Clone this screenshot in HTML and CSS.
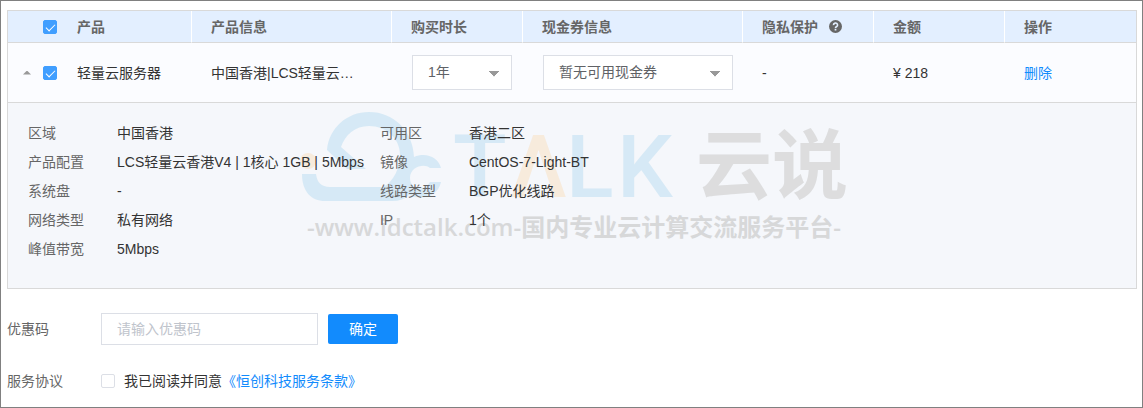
FILE: index.html
```html
<!DOCTYPE html>
<html lang="zh-CN">
<head>
    <meta charset="UTF-8">
    <meta name="viewport" content="width=device-width, initial-scale=1.0">
    <title>确认订单</title>
    <link rel="stylesheet" href="styles.css">
</head>
<body>
    <main class="pagina">
        <section class="pedido">
            <table class="tabla">
                <colgroup>
                    <col class="col-check">
                    <col class="col-producto">
                    <col class="col-info">
                    <col class="col-corta">
                    <col class="col-cupon">
                    <col class="col-corta">
                    <col class="col-corta">
                    <col class="col-corta">
                </colgroup>
                <thead>
                    <tr>
                        <th class="celda-check">
                            <div class="controles">
                                <input type="checkbox" class="check" aria-label="全选" checked>
                            </div>
                        </th>
                        <th class="celda-nombre">产品</th>
                        <th>产品信息</th>
                        <th>购买时长</th>
                        <th>现金券信息</th>
                        <th>
                            <span class="con-ayuda">隐私保护
                                <svg class="ayuda" viewBox="0 0 12 12" aria-hidden="true">
                                    <circle cx="6" cy="6" r="6" fill="#666"/>
                                    <path d="M4.1 4.7a1.9 1.8 0 1 1 2.8 1.5q-.9.5-.9 1.1" fill="none" stroke="#e3efff" stroke-width="1.5"/>
                                    <rect x="5.2" y="8.1" width="1.6" height="1.6" fill="#e3efff"/>
                                </svg>
                            </span>
                        </th>
                        <th>金额</th>
                        <th>操作</th>
                    </tr>
                </thead>
                <tbody>
                    <tr>
                        <td class="celda-check">
                            <div class="controles">
                                <button type="button" class="plegar" aria-label="收起"></button>
                                <input type="checkbox" class="check" aria-label="选择轻量云服务器" checked>
                            </div>
                        </td>
                        <td class="celda-nombre">轻量云服务器</td>
                        <td><div class="recorte">中国香港|LCS轻量云…</div></td>
                        <td class="celda-selector">
                            <select class="selector selector-tiempo" aria-label="购买时长">
                                <option>1年</option>
                            </select>
                        </td>
                        <td class="celda-selector">
                            <select class="selector selector-cupon" aria-label="现金券信息">
                                <option>暂无可用现金券</option>
                            </select>
                        </td>
                        <td>-</td>
                        <td>¥ 218</td>
                        <td><a href="#" class="enlace">删除</a></td>
                    </tr>
                </tbody>
            </table>
            <div class="detalle">
                <svg class="marca" viewBox="300 108 550 134" aria-hidden="true">
                    <circle cx="308" cy="161" r="8" class="marca-naranja"/>
                    <path class="marca-azul" d="M327 150C329 128 347 112 369 112C394 112 413 131 414 157C426 152 438 157 441 168H430C424 163 410 167 410 178C410 190 424 192 430 182H441C438 196 423 201 409 195Q403 201 392 201H325C311 201 302 191 302 174H316C317 182 321 187 330 187H383C394 182 400 167 400 155C400 138 386 126 369 126C355 126 345 135 341 147L366 169H347Z"/>
                    <text class="marca-letras" y="197"><tspan x="453" class="marca-azul">T</tspan><tspan x="510" class="marca-naranja">Λ</tspan><tspan x="566" class="marca-azul">L</tspan><tspan x="617" class="marca-azul">K</tspan></text>
                    <text class="marca-nombre" x="696" y="193">云说</text>
                    <text class="marca-lema" x="307" y="236">-www.idctalk.com-国内专业云计算交流服务平台-</text>
                </svg>
                <dl class="lista">
                    <dt>区域</dt><dd>中国香港</dd>
                    <dt>产品配置</dt><dd>LCS轻量云香港V4 | 1核心 1GB | 5Mbps</dd>
                    <dt>系统盘</dt><dd>-</dd>
                    <dt>网络类型</dt><dd>私有网络</dd>
                    <dt>峰值带宽</dt><dd>5Mbps</dd>
                </dl>
                <dl class="lista">
                    <dt>可用区</dt><dd>香港二区</dd>
                    <dt>镜像</dt><dd>CentOS-7-Light-BT</dd>
                    <dt>线路类型</dt><dd>BGP优化线路</dd>
                    <dt>IP</dt><dd>1个</dd>
                </dl>
            </div>
        </section>
        <form class="formulario">
            <div class="fila">
                <label class="etiqueta" for="codigo">优惠码</label>
                <input type="text" id="codigo" class="campo" placeholder="请输入优惠码">
                <button type="button" class="boton">确定</button>
            </div>
            <div class="fila">
                <span class="etiqueta">服务协议</span>
                <input type="checkbox" id="acuerdo" class="check">
                <label class="texto-acuerdo" for="acuerdo">我已阅读并同意<a href="#" class="enlace">《恒创科技服务条款》</a></label>
            </div>
        </form>
    </main>
</body>
</html>
```
FILE: styles.css
```css
:root {
    --azul: #128bfd;
    --borde: #d9d9d9;
    --borde-campo: #dcdfe6;
    --texto: #333;
    --texto-suave: #666;
}
* {
    box-sizing: border-box;
}
body {
    margin: 0;
    background: white;
    color: var(--texto);
    font: 14px/20px "Liberation Sans", "Noto Sans CJK SC", sans-serif;
}
input, select, button {
    font: inherit;
    margin: 0;
}
.pagina {
    min-height: 100vh;
    padding: 9px 5px 10px 6px;
    border: 1px solid #808080;
}
.pedido {
    border: 1px solid var(--borde);
}
.tabla {
    width: 100%;
    table-layout: fixed;
    border-collapse: separate;
    border-spacing: 0;
}
.col-check { width: 60px; }
.col-producto { width: 124px; }
.col-info { width: 200px; }
.col-corta { width: 131px; }
.col-cupon { width: 220px; }
th, td {
    padding: 0 0 0 19px;
    text-align: left;
    border-bottom: 1px solid var(--borde);
    white-space: nowrap;
}
th {
    height: 32px;
    background: #e3efff;
    color: var(--texto-suave);
    border-right: 1px solid white;
}
th:last-child {
    border-right: none;
}
td {
    height: 60px;
    background: #fbfcff;
}
.celda-check {
    padding: 0 11px 0 0;
    border-right: none;
}
.celda-nombre {
    padding-left: 9px;
}
.celda-selector {
    padding-left: 20px;
}
.controles {
    display: flex;
    align-items: center;
    justify-content: flex-end;
    gap: 12px;
}
.plegar {
    width: 8px;
    height: 4px;
    padding: 0;
    border: none;
    background: #999;
    clip-path: polygon(50% 0, 100% 100%, 0 100%);
    cursor: pointer;
}
.check {
    appearance: none;
    flex: none;
    width: 14px;
    height: 14px;
    border: 1px solid var(--borde-campo);
    border-radius: 2px;
    background: white;
}
.check:checked {
    border-color: #409eff;
    background: #409eff;
}
.check:checked::after {
    content: "";
    display: block;
    width: 8px;
    height: 4px;
    margin: 3px 2px;
    border: solid white;
    border-width: 0 0 1px 1px;
    transform: rotate(-45deg);
}
.con-ayuda {
    display: flex;
    align-items: center;
    gap: 11px;
}
.ayuda {
    width: 13px;
    height: 13px;
}
.recorte {
    overflow: hidden;
    text-overflow: ellipsis;
}
.selector {
    appearance: none;
    display: block;
    height: 35px;
    padding: 0 15px 2px;
    border: 1px solid var(--borde-campo);
    border-radius: 0;
    color: #606266;
    background: linear-gradient(to bottom left, #999 50%, transparent 51%) right 17px top 15px / 5px 6px no-repeat,
        linear-gradient(to bottom right, #999 50%, transparent 51%) right 12px top 15px / 5px 6px no-repeat,
        white;
}
.selector-tiempo { width: 100px; }
.selector-cupon { width: 190px; }
.enlace {
    color: var(--azul);
    text-decoration: none;
}
.detalle {
    position: relative;
    display: flex;
    gap: 16px;
    padding: 16px 20px 24px;
    background: #f5f7fb;
}
.lista {
    display: grid;
    grid-template-columns: 89px auto;
    align-content: start;
    margin: 0;
    line-height: 29px;
    z-index: 1;
}
.lista dt {
    color: var(--texto-suave);
}
.lista dd {
    margin: 0;
}
.marca {
    position: absolute;
    top: 5px;
    left: 292px;
    width: 550px;
    height: 134px;
    overflow: visible;
    opacity: 0.7;
    pointer-events: none;
}
.marca-azul { fill: #cae4f4; }
.marca-naranja { fill: #f8e6d0; }
.marca-letras {
    font: 500 88px Roboto, sans-serif;
}
.marca-nombre {
    font: bold 76px "Noto Sans CJK SC", sans-serif;
    fill: #d3d3d3;
}
.marca-lema {
    font: 600 24px "Open Sans", "Noto Sans CJK SC", sans-serif;
    fill: #cbcbcb;
}
.formulario {
    padding-top: 24px;
}
.fila {
    display: flex;
    align-items: center;
    height: 32px;
    margin-bottom: 20px;
}
.fila:last-child {
    margin-bottom: 0;
}
.etiqueta {
    width: 94px;
    color: var(--texto-suave);
}
.campo {
    width: 217px;
    height: 32px;
    padding: 0 15px;
    border: 1px solid var(--borde-campo);
    color: var(--texto);
}
.campo::placeholder {
    color: #c0c4cc;
}
.boton {
    width: 70px;
    height: 30px;
    margin-left: 10px;
    padding: 0;
    border: none;
    border-radius: 2px;
    background: var(--azul);
    color: white;
    cursor: pointer;
}
.texto-acuerdo {
    margin-left: 9px;
}
```
